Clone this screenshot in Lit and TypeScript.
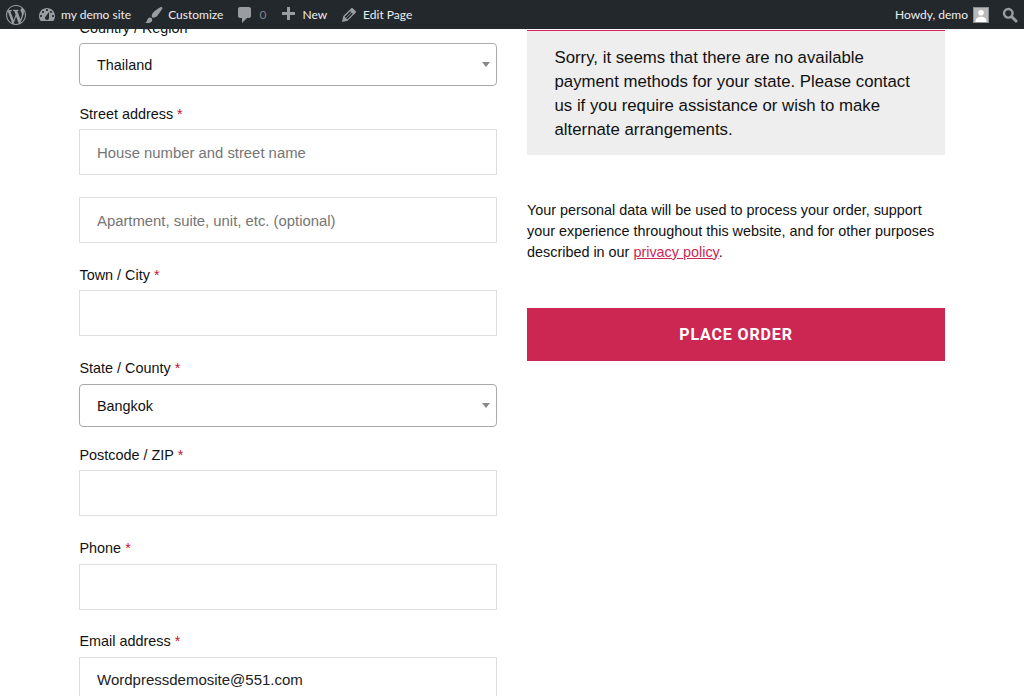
import { LitElement, html, css, svg } from "lit";
import { customElement } from "lit/decorators.js";

const ICONS = {
  wp: "M20 10c0-5.51-4.49-10-10-10C4.48 0 0 4.49 0 10c0 5.52 4.48 10 10 10 5.51 0 10-4.48 10-10zM7.78 15.37L4.37 6.22c.55-.02 1.17-.08 1.17-.08.5-.06.44-1.13-.06-1.11 0 0-1.45.11-2.37.11-.18 0-.37 0-.58-.01C4.12 2.69 6.87 1.11 10 1.11c2.33 0 4.45.87 6.05 2.34-.68-.11-1.65.39-1.65 1.58 0 .74.45 1.36.9 2.1.35.61.55 1.36.55 2.46 0 1.49-1.4 5-1.4 5l-3.03-8.37c.54-.02.82-.17.82-.17.5-.05.44-1.25-.06-1.22 0 0-1.44.12-2.38.12-.87 0-2.33-.12-2.33-.12-.5-.03-.56 1.2-.06 1.22l.92.08 1.26 3.41zM17.41 10c.24-.64.74-1.87.43-4.25.7 1.29 1.05 2.71 1.05 4.25 0 3.29-1.73 6.24-4.4 7.78.97-2.59 1.94-5.2 2.92-7.78zM6.1 18.09C3.12 16.65 1.11 13.53 1.11 10c0-1.3.23-2.48.72-3.59C3.25 10.3 4.67 14.2 6.1 18.09zm4.03-6.63l2.58 6.98c-.86.29-1.76.45-2.71.45-.79 0-1.57-.11-2.29-.33.81-2.38 1.62-4.74 2.42-7.1z",
  dash: "M3.76 16h12.48c1.1-1.37 1.76-3.11 1.76-5 0-4.42-3.58-8-8-8s-8 3.58-8 8c0 1.89.66 3.63 1.76 5zM10 4c.55 0 1 .45 1 1s-.45 1-1 1-1-.45-1-1 .45-1 1-1zM6 6c.55 0 1 .45 1 1s-.45 1-1 1-1-.45-1-1 .45-1 1-1zm8 0c.55 0 1 .45 1 1s-.45 1-1 1-1-.45-1-1 .45-1 1-1zm-5.37 5.55L12 7v6c0 1.1-.9 2-2 2s-2-.9-2-2c0-.57.24-1.08.63-1.45zM4 10c.55 0 1 .45 1 1s-.45 1-1 1-1-.45-1-1 .45-1 1-1zm12 0c.55 0 1 .45 1 1s-.45 1-1 1-1-.45-1-1 .45-1 1-1z",
  brush: "M18.33 3.57s.27-.8-.31-1.36c-.53-.52-1.22-.24-1.22-.24-.61.3-5.76 3.47-7.67 5.57-.86.96-2.06 3.79-1.09 4.82.92.98 3.96-.17 4.79-1 2.06-2.06 5.21-7.17 5.5-7.79zM1.4 17.65c2.37-1.56 1.46-3.41 3.23-4.64.93-.65 2.22-.62 3.08.29.63.67.8 2.57-.16 3.46-1.57 1.45-4 1.55-6.15.89z",
  comment: "M5 2h9c1.1 0 2 .9 2 2v7c0 1.1-.9 2-2 2h-2l-5 5v-5H5c-1.1 0-2-.9-2-2V4c0-1.1.9-2 2-2z",
  plus: "M17 7v3h-5v5H9v-5H4V7h5V2h3v5h5z",
  edit: "M13.89 3.39l2.71 2.72c.46.46.42 1.24.03 1.64l-8.01 8.02-5.56 1.16 1.16-5.58s7.6-7.63 7.99-8.03c.39-.39 1.22-.39 1.68.07zm-2.73 2.79l-5.59 5.61 1.11 1.11 5.54-5.65zm-2.97 8.23l5.58-5.6-1.07-1.08-5.59 5.6z",
};

const icon = (d: string) =>
  html`<svg class="ico" viewBox="0 0 20 20">${svg`<path d=${d}></path>`}</svg>`;

@customElement("app-root")
export class AppRoot extends LitElement {
  static styles = css`
    :host {
      display: block;
      position: relative;
      height: 696px;
      overflow: hidden;
      background: #fff;
      font-family: "Liberation Sans", Arial, sans-serif;
      color: #111;
    }
    .bar {
      position: absolute;
      inset: 0 0 auto 0;
      z-index: 5;
      height: 29px;
      background: #23282d;
      display: flex;
      align-items: center;
      font: 12px/29px Lato, sans-serif;
      color: #eee;
    }
    .ico { fill: #999da2; display: block; flex: none; width: 20px; height: 20px; }
    .item { display: flex; align-items: center; gap: 4px; white-space: nowrap; }
    .wp { margin-left: 6px; }
    .site { margin-left: 11px; }
    .cust { margin-left: 13px; }
    .comm { margin-left: 12px; }
    .new { margin-left: 12px; }
    .editp { margin-left: 12px; }
    .dim { color: #7d8287; }
    .right { margin-left: auto; display: flex; align-items: center; }
    .avatar {
      width: 16px;
      height: 16px;
      margin-left: 5px;
      background: #b9b9b9;
      border: 1px solid #8c8f94;
      box-sizing: border-box;
      display: block;
    }
    .search { width: 16px; height: 16px; margin: 0 6px 0 13px; fill: none; }
    .search circle { fill: none; stroke: #999da2; stroke-width: 2.4; }
    .search line { stroke: #999da2; stroke-width: 3; stroke-linecap: round; }

    .page {
      display: grid;
      grid-template-columns: 418px 418px;
      column-gap: 30px;
      padding: 18px 0 0 79px;
    }
    .left { display: flex; flex-direction: column; }
    .label { font-size: 14.4px; line-height: 21px; margin-bottom: 4px; padding-left: 0.5px; }
    .label.tall { margin-bottom: 5px; }
    .req { color: #c4142f; }
    .field { margin-bottom: 22px; }
    .field.sel { margin-bottom: 18px; }
    .field.tight { margin-bottom: 21px; }
    .input {
      display: block;
      width: 100%;
      height: 46px;
      box-sizing: border-box;
      border: 1px solid #ddd;
      padding: 0 17px;
      font: 15px "Liberation Sans", Arial, sans-serif;
      color: #222;
      background: #fff;
      outline: none;
      border-radius: 0;
    }
    .input.filled { padding-bottom: 2px; }
    .input::placeholder { color: #757575; opacity: 1; font-size: 14.85px; }
    .select {
      height: 43px;
      box-sizing: border-box;
      border: 1px solid #aaa;
      border-radius: 4px;
      padding: 0 17px;
      display: flex;
      align-items: center;
      position: relative;
      font-size: 14.4px;
      color: #111;
    }
    .select::after {
      content: "";
      position: absolute;
      right: 6px;
      top: 18px;
      border: 4px solid transparent;
      border-top: 5px solid #888;
      border-bottom: 0;
    }
    .rightcol { padding-top: 12px; }
    .notice {
      background: #eee;
      border-top: 1px solid #dc2355;
      box-sizing: border-box;
      height: 125px;
      padding: 15px 28px 0 27.5px;
      font-size: 16.8px;
      line-height: 24px;
    }
    .privacy {
      margin: 45px 0 0;
      font-size: 14.4px;
      line-height: 21px;
    }
    .privacy a { color: #cc2753; text-decoration: underline; }
    .btn {
      margin-top: 45px;
      height: 53px;
      background: #cc2753;
      color: #fff;
      display: flex;
      align-items: center;
      justify-content: center;
      font: 700 16px Roboto, sans-serif;
      letter-spacing: 0.86px;
    }
  `;

  private field(label: string, opts: { value?: string; placeholder?: string; tall?: boolean; tight?: boolean } = {}) {
    const { value = "", placeholder = "", tall = false, tight = false } = opts;
    return html`<div class="field ${tight ? "tight" : ""}">
      ${label ? html`<div class="label ${tall ? "tall" : ""}">${label} <span class="req">*</span></div>` : ""}
      <input class="input ${value ? "filled" : ""}" .value=${value} placeholder=${placeholder} />
    </div>`;
  }

  private select(label: string, value: string, tall = false) {
    return html`<div class="field sel">
      <div class="label ${tall ? "tall" : ""}">${label} <span class="req">*</span></div>
      <div class="select">${value}</div>
    </div>`;
  }

  render() {
    return html`
      <div class="bar">
        <div class="item wp">${icon(ICONS.wp)}</div>
        <div class="item site">${icon(ICONS.dash)}<span>my demo site</span></div>
        <div class="item cust">${icon(ICONS.brush)}<span>Customize</span></div>
        <div class="item comm">${icon(ICONS.comment)}<span class="dim">0</span></div>
        <div class="item new">${icon(ICONS.plus)}<span>New</span></div>
        <div class="item editp">${icon(ICONS.edit)}<span>Edit Page</span></div>
        <div class="right">
          <span>Howdy, demo</span>
          <svg class="avatar" viewBox="0 0 14 14">
            <circle cx="7" cy="4.8" r="2.8" fill="#fff"></circle>
            <path d="M1.5 14c0-4 2.6-5.2 5.5-5.2s5.5 1.2 5.5 5.2z" fill="#fff"></path>
          </svg>
          <svg class="search" viewBox="0 0 16 16">
            <circle cx="6.3" cy="6.3" r="4.3"></circle>
            <line x1="10" y1="10" x2="14" y2="14"></line>
          </svg>
        </div>
      </div>
      <div class="page">
        <div class="left">
          ${this.select("Country / Region", "Thailand")}
          ${this.field("Street address", { placeholder: "House number and street name" })}
          ${this.field("", { placeholder: "Apartment, suite, unit, etc. (optional)" })}
          ${this.field("Town / City")}
          ${this.select("State / County", "Bangkok", true)}
          ${this.field("Postcode / ZIP")}
          ${this.field("Phone", { tall: true, tight: true })}
          ${this.field("Email address", { value: "Wordpressdemosite@551.com", tall: true })}
        </div>
        <div class="rightcol">
          <div class="notice">
            Sorry, it seems that there are no available payment methods for your state. Please contact us if you require assistance or wish to make alternate arrangements.
          </div>
          <p class="privacy">
            Your personal data will be used to process your order, support your experience throughout this website, and for other purposes described in our <a>privacy policy</a>.
          </p>
          <div class="btn">PLACE ORDER</div>
        </div>
      </div>
    `;
  }
}
